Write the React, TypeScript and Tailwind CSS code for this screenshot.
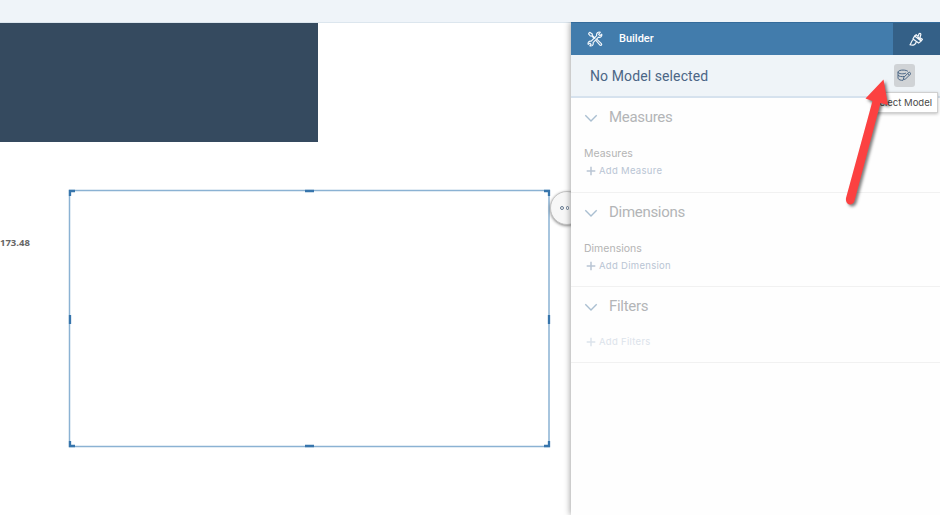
import React from "react";

function Chevron() {
  return (
    <svg width="14" height="9" viewBox="0 0 14 9" fill="none" stroke="#aabfd1" strokeWidth="1.4">
      <path d="M1.3 1.3 7 7l5.700-5.700" />
    </svg>
  );
}

function Tools() {
  return (
    <svg width="16" height="16" viewBox="0 0 16 16" fill="none" stroke="#f2f7fb" strokeWidth="1.15" strokeLinejoin="round">
      <path d="M1.400 2.600 2.700 1.300 5.300 3v1.500l3 3M1.400 2.600 3.300 5h1.500l2.700 2.700M8.700 9.200l4.200 4.900c1 .8 2.400-.5 1.500-1.500L9.800 8.200" />
      <path d="M13.300 1.200c-2-.8-4.300 1-3.600 3.400L4.200 10.200c-2-.6-3.700 1.200-3 3.200l1.700-1.200 1.200 1.200-1.300 1.400c2 .7 4-.9 3.300-3.200l5.400-5.400c2.200.6 3.800-1.200 3.200-3l-1.800 1.500-1.300-1.300z" />
    </svg>
  );
}

function Brush() {
  return (
    <svg width="15" height="15" viewBox="0 0 15 15" fill="none" stroke="#f5f8fb" strokeWidth="1.2" strokeLinejoin="round">
      <path d="M5.600 4 7.200 2.700l1.700 1.700 1.200-2.700c.7-.9 2.200.1 1.700 1.100l-.9 2.900 2.500 1.600-1.200 1.700zM5.600 4l6.600 5M5.600 4 4 6.900l5.600 4.200 2.600-2.100" />
      <path d="M4.700 7.500C2.400 7.800 3 10.300 1 12.800c2.700 1 5.800.2 6.200-2.900" />
      <path d="m8.600 5.200 3.200 2.500" strokeWidth="1.800" />
    </svg>
  );
}

function ModelIcon() {
  return (
    <svg width="15" height="13" viewBox="0 0 15 13" fill="none" stroke="#4b6786" strokeWidth="1" strokeLinejoin="round">
      <path d="M11 2.600C10 .7 2 .3 1 2.900c0 2.200 6.500 2.400 8 1.100M1 2.900v6.300c.5 1.700 3 2.200 5 2.100M1 6c.7 1.500 4 1.900 6 1.500" />
      <path d="m6.200 10.800.7-2.600 5.300-5.100 1.800 1.500-5.300 5.200zM10.700 4.600l1.700 1.500" />
    </svg>
  );
}

function Heading({ children, spacing }: { children: string; spacing: string }) {
  return (
    <div className="flex h-[37px] items-center pl-[13px]">
      <div className="w-[25px] pt-[3px]"><Chevron /></div>
      <h2 className={"font-[Roboto,sans-serif] text-[15px] leading-5 text-[#b3b5b7] " + spacing}>{children}</h2>
    </div>
  );
}

function Add({ children, color, spacing }: { children: string; color: string; spacing: string }) {
  return (
    <div className={"flex h-3 items-center pl-[15px] " + color}>
      <svg className="mr-[3px]" width="10" height="10" viewBox="0 0 10 10" stroke="currentColor" strokeWidth="1.5">
        <path d="M5 .7v8.600M.7 5h8.600" />
      </svg>
      <span className={"text-[9.5px] leading-3 " + spacing}>{children}</span>
    </div>
  );
}

function SelectionBox() {
  return (
    <div className="absolute left-[68px] top-[189px] h-[259px] w-[483px]">
      <svg width="483" height="259" viewBox="0 0 483 259" fill="none">
        <rect x="1.500" y="1.500" width="479.500" height="256" stroke="#8bb2d3" strokeWidth="1.500" />
        <path d="M2 7V2h5M476 2h5v5M2 252v5h5M476 257h5v-5M237 2h9M237 257h9M2 126v9M481 126v9" stroke="#3775ac" strokeWidth="2.300" />
      </svg>
    </div>
  );
}

export default function App() {
  return (
    <main className="flex h-[515px] w-[940px] flex-col overflow-hidden bg-white font-[Inter,sans-serif]">
      <header className="h-[23px] shrink-0 border-b border-[#dce6ee] bg-[#eff4f9]" />
      <div className="flex grow">
        <section className="w-[571px] shrink-0">
          <div className="h-[119px] w-[318px] bg-[#354a5f]" />
          <div className="mt-[95px] flex h-3 items-center">
            <span className="font-['Open_Sans',sans-serif] text-[9.500px] font-bold leading-3 text-[#666]">173.48</span>
          </div>
          <SelectionBox />
          <div className="absolute left-[550px] top-[191px] flex h-[34px] w-[34px] items-center gap-[2px] rounded-full border border-[#c5c5c5] bg-[#f7f7f7] pl-[9px] shadow-[0_1px_3px_rgba(0,0,0,0.45)]">
            <i className="size-[3.500px] rounded-full border border-[#657990]" />
            <i className="size-[3.500px] rounded-full border border-[#657990]" />
            <i className="size-[3.500px] rounded-full border border-[#657990]" />
          </div>
        </section>
        <aside className="relative -mt-px w-[369px] bg-[#fefefe] shadow-[-1px_0_6px_rgba(0,0,0,0.35)] [clip-path:inset(0_0_0_-12px)]">
          <div className="flex h-[33px] border-t border-[#346b9b] bg-[#427cac] text-white">
            <div className="flex grow items-center pl-4">
              <Tools />
              <span className="ml-4 font-[Roboto,sans-serif] text-[11px] font-medium leading-4">Builder</span>
            </div>
            <div className="flex w-[47px] items-center justify-center bg-[#346087]"><Brush /></div>
          </div>
          <div className="flex h-[43px] items-center justify-between border-b-2 border-[#d6e2ee] bg-[#eff4f8] pl-[19px] pr-[25px]">
            <h1 className="font-[Roboto,sans-serif] text-[14px] leading-5 tracking-[0.1px] text-[#4b6686]">No Model selected</h1>
            <div className="flex h-[23px] w-[21px] items-center justify-center rounded-[3px] bg-[#d0d3d6]"><ModelIcon /></div>
          </div>
          <div className="h-[95px] border-b border-[#f1f1f1]">
            <Heading spacing="tracking-[-0.3px]">Measures</Heading>
            <div className="mt-[11px] h-[15px] pl-[13px] text-[10.500px] leading-[15px] text-[#b4b4b4]">Measures</div>
            <div className="mt-[4px]"><Add color="text-[#b9c5d4]" spacing="tracking-[0.3px]">Add Measure</Add></div>
          </div>
          <div className="h-[94px] border-b border-[#f1f1f1]">
            <Heading spacing="tracking-[-0.3px]">Dimensions</Heading>
            <div className="mt-[11px] h-[15px] pl-[13px] text-[10.500px] leading-[15px] text-[#b4b4b4]">Dimensions</div>
            <div className="mt-[4px]"><Add color="text-[#b9c5d4]" spacing="tracking-[0.3px]">Add Dimension</Add></div>
          </div>
          <div className="h-[76px] border-b border-[#f1f1f1]">
            <Heading spacing="tracking-[-0.3px]">Filters</Heading>
            <div className="mt-[12px]"><Add color="text-[#dce3eb]" spacing="tracking-[0.3px]">Add Filters</Add></div>
          </div>
          <div className="absolute left-[301px] top-[70px] h-[21px] w-[66px] border border-[#d0d0d0] bg-white pr-[5px] text-right text-[9.500px] leading-[19px] text-[#4a4a4a] shadow-[0_1px_3px_rgba(0,0,0,0.25)]">Select Model</div>
        </aside>
      </div>
      <svg className="absolute left-[835px] top-[70px] drop-shadow-[2px_2px_1.500px_rgba(0,0,0,0.5)]" width="65" height="145" viewBox="0 0 65 145">
        <path d="m48.500 9.500-18 19 7 2.500-26.500 97c-1 7.500 7 8.500 8.500 3L45.500 33l7.500 2z" fill="#fc4141" />
      </svg>
    </main>
  );
}
